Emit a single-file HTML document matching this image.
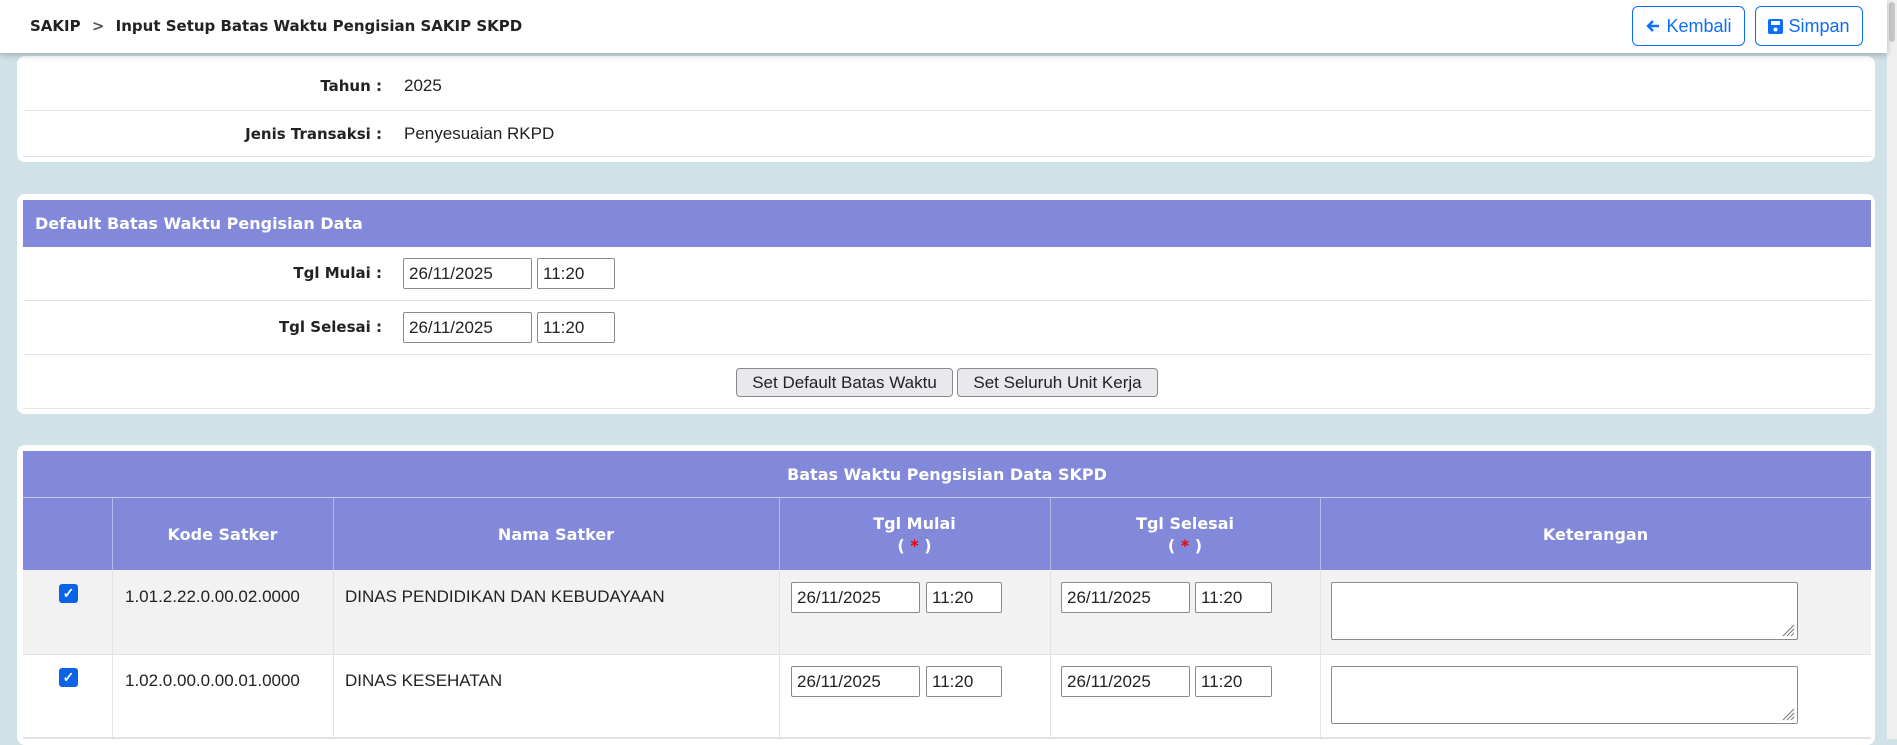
<!DOCTYPE html>
<html><head><meta charset="utf-8"><style>
*{box-sizing:border-box;margin:0;padding:0}
body{width:1897px;height:739px;overflow:hidden;background:#d0e2e8;font-family:"Liberation Sans",sans-serif;font-size:17px;color:#222;position:relative}
.abs{position:absolute}
b,.b{font-family:"DejaVu Sans",sans-serif;font-weight:bold}
.hdr{left:0;top:0;width:1887px;height:53px;background:#fff;box-shadow:0 2px 6px rgba(0,0,0,.25);z-index:2}
.sb{left:1887px;top:0;width:10px;height:739px;background:#f0f0f0}
.sb i{position:absolute;left:2px;top:2px;width:6px;height:40px;background:#c8c8c8;border-radius:3px}
.btn{top:6px;height:40px;border:1px solid #0d6efd;border-radius:6px;color:#0d6efd;font-size:18px;display:flex;align-items:center;justify-content:center;gap:5px;background:#fff}
.panel{background:#fff;border-radius:8px;left:17px;width:1858px}
.line{left:23px;width:1848px;height:1px;background:#e2e2e6}
.lbl{text-align:right;width:360px;left:22px;font-size:15px}
.inp{border:1px solid #8a8a8a;border-radius:2px;background:#fff;font-size:17px;padding-left:5px;display:flex;align-items:center;height:31px}
.ph{background:#8389da;color:#fff}
.pbtn{top:368px;height:29px;border:1px solid #8a8a8a;border-radius:4px;background:#e9e9ed;font-size:17px;display:flex;align-items:center;justify-content:center}
.vl{width:1px;background:#e2e2e6}
.vh{width:1px;background:#b4b8ea}
.cb{width:19px;height:19px;background:#0b63e5;border-radius:3px;color:#fff;font-size:14px;font-weight:bold;display:flex;align-items:center;justify-content:center}
.ta{border:1px solid #8a8a8a;border-radius:2px;background:#fff;width:467px;height:58px}
.ta svg{position:absolute;right:2px;bottom:2px}
.ch{color:#fff;font-size:16px;text-align:center}
</style></head><body>
<div class="abs hdr">
 <div class="abs b" style="left:30px;top:17px;font-size:15px">SAKIP <span style="color:#555;margin:0 6px">&gt;</span> Input Setup Batas Waktu Pengisian SAKIP SKPD</div>
 <div class="abs btn" style="left:1632px;width:113px"><svg width="16" height="16" viewBox="0 0 16 16"><path d="M14 8H3M8 3L3 8l5 5" stroke="#0d6efd" stroke-width="2.4" fill="none"/></svg>Kembali</div>
 <div class="abs btn" style="left:1755px;width:108px"><svg width="15" height="16" viewBox="0 0 15 16"><rect x="0" y="1" width="15" height="15" rx="2" fill="#0d6efd"/><rect x="3" y="3" width="9" height="4" fill="#fff"/><circle cx="7.5" cy="11.5" r="2" fill="#fff"/></svg>Simpan</div>
</div>
<div class="abs sb"><i></i></div>

<div class="abs panel" style="top:56px;height:106px"></div>
<div class="abs lbl b" style="top:77px">Tahun :</div>
<div class="abs" style="left:404px;top:76px">2025</div>
<div class="abs line" style="top:110px"></div>
<div class="abs lbl b" style="top:125px">Jenis Transaksi :</div>
<div class="abs" style="left:404px;top:124px">Penyesuaian RKPD</div>
<div class="abs line" style="top:156px"></div>

<div class="abs panel" style="top:194px;height:220px"></div>
<div class="abs ph b" style="left:23px;top:200px;width:1848px;height:47px;padding:14px 12px;font-size:16px">Default Batas Waktu Pengisian Data</div>
<div class="abs lbl b" style="top:264px">Tgl Mulai :</div>
<div class="abs inp" style="left:403px;top:258px;width:129px">26/11/2025</div>
<div class="abs inp" style="left:537px;top:258px;width:78px">11:20</div>
<div class="abs line" style="top:300px"></div>
<div class="abs lbl b" style="top:318px">Tgl Selesai :</div>
<div class="abs inp" style="left:403px;top:312px;width:129px">26/11/2025</div>
<div class="abs inp" style="left:537px;top:312px;width:78px">11:20</div>
<div class="abs line" style="top:354px"></div>
<div class="abs pbtn" style="left:736px;width:217px">Set Default Batas Waktu</div>
<div class="abs pbtn" style="left:957px;width:201px">Set Seluruh Unit Kerja</div>
<div class="abs line" style="top:408px"></div>

<div class="abs panel" style="top:445px;height:300px"></div>
<div class="abs ph b" style="left:23px;top:451px;width:1848px;height:47px;text-align:center;padding-top:14px;border-bottom:1px solid #c4c8f0;font-size:16px">Batas Waktu Pengsisian Data SKPD</div>
<div class="abs ph" style="left:23px;top:498px;width:1848px;height:72px"></div>
<div class="abs vh" style="left:112px;top:498px;height:72px"></div>
<div class="abs vh" style="left:333px;top:498px;height:72px"></div>
<div class="abs vh" style="left:779px;top:498px;height:72px"></div>
<div class="abs vh" style="left:1050px;top:498px;height:72px"></div>
<div class="abs vh" style="left:1320px;top:498px;height:72px"></div>
<div class="abs ch b" style="left:112px;width:221px;top:525px">Kode Satker</div>
<div class="abs ch b" style="left:333px;width:446px;top:525px">Nama Satker</div>
<div class="abs ch b" style="left:779px;width:271px;top:513px;line-height:22px">Tgl Mulai<br>(&nbsp;<span style="color:#e00">*</span>&nbsp;)</div>
<div class="abs ch b" style="left:1050px;width:270px;top:513px;line-height:22px">Tgl Selesai<br>(&nbsp;<span style="color:#e00">*</span>&nbsp;)</div>
<div class="abs ch b" style="left:1320px;width:551px;top:525px">Keterangan</div>

<div class="abs" style="left:23px;top:570px;width:1848px;height:85px;background:#f2f2f2;border-bottom:1px solid #e2e2e6"></div>
<div class="abs" style="left:23px;top:737px;width:1848px;height:2px;background:#e2e2e6"></div>
<div class="abs vl" style="left:112px;top:570px;height:169px"></div>
<div class="abs vl" style="left:333px;top:570px;height:169px"></div>
<div class="abs vl" style="left:779px;top:570px;height:169px"></div>
<div class="abs vl" style="left:1050px;top:570px;height:169px"></div>
<div class="abs vl" style="left:1320px;top:570px;height:169px"></div>

<div class="abs cb" style="left:59px;top:584px">✓</div>
<div class="abs" style="left:125px;top:587px">1.01.2.22.0.00.02.0000</div>
<div class="abs" style="left:345px;top:587px">DINAS PENDIDIKAN DAN KEBUDAYAAN</div>
<div class="abs inp" style="left:791px;top:582px;width:129px">26/11/2025</div>
<div class="abs inp" style="left:926px;top:582px;width:76px">11:20</div>
<div class="abs inp" style="left:1061px;top:582px;width:129px">26/11/2025</div>
<div class="abs inp" style="left:1195px;top:582px;width:77px">11:20</div>
<div class="abs ta" style="left:1331px;top:582px"><svg width="14" height="14"><path d="M13 2L2 13M13 6L6 13M13 10L10 13" stroke="#777" stroke-width="1"/></svg></div>

<div class="abs cb" style="left:59px;top:668px">✓</div>
<div class="abs" style="left:125px;top:671px">1.02.0.00.0.00.01.0000</div>
<div class="abs" style="left:345px;top:671px">DINAS KESEHATAN</div>
<div class="abs inp" style="left:791px;top:666px;width:129px">26/11/2025</div>
<div class="abs inp" style="left:926px;top:666px;width:76px">11:20</div>
<div class="abs inp" style="left:1061px;top:666px;width:129px">26/11/2025</div>
<div class="abs inp" style="left:1195px;top:666px;width:77px">11:20</div>
<div class="abs ta" style="left:1331px;top:666px"><svg width="14" height="14"><path d="M13 2L2 13M13 6L6 13M13 10L10 13" stroke="#777" stroke-width="1"/></svg></div>
</body></html>
